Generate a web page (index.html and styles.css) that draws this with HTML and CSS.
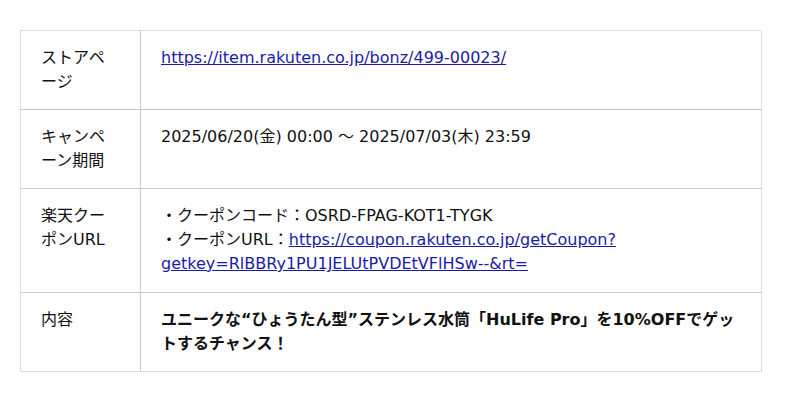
FILE: index.html
```html
<!DOCTYPE html>
<html>

<head>
    <meta charset="utf-8">
    <title>クーポン情報</title>
    <link rel="stylesheet" href="styles.css">
</head>

<body>
    <div class="contenido">
        <table class="tabla-cupon">
            <tr>
                <th>ストアページ</th>
                <td><a href="#">https://item.rakuten.co.jp/bonz/499-00023/</a></td>
            </tr>
            <tr>
                <th>キャンペーン期間</th>
                <td>2025/06/20(金) 00:00 〜 2025/07/03(木) 23:59</td>
            </tr>
            <tr class="fila-cupon">
                <th>楽天クーポンURL</th>
                <td>・クーポンコード：OSRD-FPAG-KOT1-TYGK<br>・クーポンURL：<a href="#">https://coupon.rakuten.co.jp/getCoupon?getkey=RlBBRy1PU1JELUtPVDEtVFlHSw--&amp;rt=</a></td>
            </tr>
            <tr>
                <th>内容</th>
                <td><strong>ユニークな“ひょうたん型”ステンレス水筒「HuLife Pro」を10%OFFでゲットするチャンス！</strong></td>
            </tr>
        </table>
    </div>
</body>

</html>
```

FILE: styles.css
```css
* {
    font-family: "DejaVu Sans", "Noto Sans CJK JP", sans-serif;
}

body {
    margin: 0;
    background-color: #ffffff;
    color: #111111;
}

.contenido {
    padding: 30px 38px 30px 20px;
}

.tabla-cupon {
    width: 742px;
    border-collapse: collapse;
    border: 1px solid #dddddd;
    font-size: 16px;
    line-height: 24px;
}

.tabla-cupon th,
.tabla-cupon td {
    padding: 15px 20px;
    text-align: left;
    vertical-align: top;
    border-top: 1px solid #c8c8c8;
    border-bottom: 1px solid #c8c8c8;
}

.tabla-cupon th {
    width: 79px;
    font-weight: 400;
    border-right: 1px solid #c8c8c8;
}

.tabla-cupon .fila-cupon th,
.tabla-cupon .fila-cupon td {
    padding-bottom: 16px;
}

.tabla-cupon tr:first-child th,
.tabla-cupon tr:first-child td {
    border-top-color: #dddddd;
}

.tabla-cupon tr:last-child th,
.tabla-cupon tr:last-child td {
    border-bottom-color: #dddddd;
}

.tabla-cupon a {
    color: #1a1aa6;
}

.tabla-cupon strong {
    font-weight: 700;
}
```
